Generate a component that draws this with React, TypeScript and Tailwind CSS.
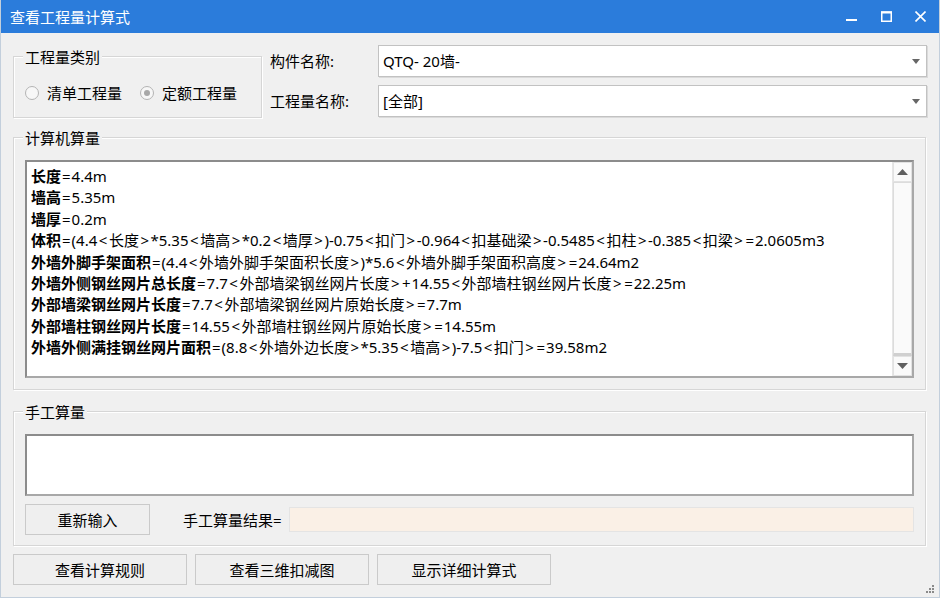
import type { ReactNode } from "react"

const font = "font-['Noto_Sans','Noto_Sans_CJK_SC',sans-serif]"

const lines: [string, string][] = [
  ["长度", "=4.4m"],
  ["墙高", "=5.35m"],
  ["墙厚", "=0.2m"],
  ["体积", "=(4.4<长度>*5.35<墙高>*0.2<墙厚>)-0.75<扣门>-0.964<扣基础梁>-0.5485<扣柱>-0.385<扣梁>=2.0605m3"],
  ["外墙外脚手架面积", "=(4.4<外墙外脚手架面积长度>)*5.6<外墙外脚手架面积高度>=24.64m2"],
  ["外墙外侧钢丝网片总长度", "=7.7<外部墙梁钢丝网片长度>+14.55<外部墙柱钢丝网片长度>=22.25m"],
  ["外部墙梁钢丝网片长度", "=7.7<外部墙梁钢丝网片原始长度>=7.7m"],
  ["外部墙柱钢丝网片长度", "=14.55<外部墙柱钢丝网片原始长度>=14.55m"],
  ["外墙外侧满挂钢丝网片面积", "=(8.8<外墙外边长度>*5.35<墙高>)-7.5<扣门>=39.58m2"],
]

// the < > = + signs are set a little wider in the original font
const Formula = ({ text }: { text: string }) => (
  <>
    {text.split(/([<>=+])/).map((part, i) =>
      /^[<>]$/.test(part) ? (
        <span key={i} className="px-[1.5px]">{part}</span>
      ) : /^[=+]$/.test(part) ? (
        <span key={i} className="px-[1px]">{part}</span>
      ) : (
        part
      )
    )}
  </>
)

const GroupBox = ({ title, className, children }: { title: string; className?: string; children: ReactNode }) => (
  <div className={`border border-[#d6d6d6] shadow-[inset_1px_1px_0_#fff,1px_1px_0_#fff] ${className ?? ""}`}>
    <div className="-mt-[10px] ml-[9px] w-fit bg-[#f0f0f0] px-[2px] text-[15px] leading-[20px]">{title}</div>
    {children}
  </div>
)

const Radio = ({ label, checked }: { label: string; checked?: boolean }) => (
  <div className="flex items-center gap-[8px]">
    <span className="flex h-[14px] w-[14px] items-center justify-center rounded-full border border-[#b4b4b4] bg-[#f7f7f7]">
      {checked && <span className="h-[6px] w-[6px] rounded-full bg-[#a8a8a8]" />}
    </span>
    <span className="text-[15px] leading-[20px]">{label}</span>
  </div>
)

const Combo = ({ value }: { value: string }) => (
  <div className="flex h-[32px] flex-1 items-center justify-between border border-[#c2c2c2] bg-white pl-[4px] pr-[6px] shadow-[1px_1px_0_#dadada]">
    <span className="text-[15px] leading-[20px]">{value}</span>
    <svg width="8" height="5" viewBox="0 0 8 5">
      <path d="M0 0h8L4 5z" fill="#666" />
    </svg>
  </div>
)

const Button = ({ label, className }: { label: string; className?: string }) => (
  <button className={`flex h-[31px] items-center justify-center border border-[#cacaca] bg-[#efefef] text-[15px] leading-[20px] ${className ?? ""}`}>
    {label}
  </button>
)

const ScrollBar = () => (
  <div className="flex w-[20px] flex-col border-l border-[#e6e6e6] bg-[#f4f4f4]">
    <div className="flex h-[20px] items-center justify-center border border-[#e2e2e2] bg-[#fafafa]">
      <svg width="11" height="6" viewBox="0 0 11 6">
        <path d="M0 6L5.5 0L11 6z" fill="#606060" />
      </svg>
    </div>
    <div className="flex-1 border border-[#dcdcdc] border-b-[3px] border-b-[#d0d0d0] bg-[#fafafa]" />
    <div className="flex h-[20px] items-center justify-center border border-[#e2e2e2] bg-[#fafafa]">
      <svg width="11" height="6" viewBox="0 0 11 6">
        <path d="M0 0L5.5 6L11 0z" fill="#606060" />
      </svg>
    </div>
  </div>
)

const App = () => {
  return (
    <div className={`flex h-[598px] w-[940px] flex-col overflow-hidden border-x border-b border-[#c3cfdc] bg-[#f0f0f0] text-black ${font}`}>
      <div className="flex h-[33px] shrink-0 items-center justify-between bg-[#2b7cdb] pl-[9px] text-white">
        <span className="text-[15px] leading-[20px]">查看工程量计算式</span>
        <div className="flex items-center">
          <div className="flex w-[35px] justify-center">
            <svg width="11" height="11" viewBox="0 0 11 11">
              <rect x="0" y="8" width="11" height="2" fill="#fff" />
            </svg>
          </div>
          <div className="flex w-[35px] justify-center">
            <svg width="11" height="11" viewBox="0 0 11 11">
              <rect x="0.75" y="1" width="9.5" height="9.25" fill="none" stroke="#fff" strokeWidth="1.5" />
              <rect x="0" y="0.5" width="11" height="2" fill="#fff" />
            </svg>
          </div>
          <div className="flex w-[35px] justify-center pr-[2px]">
            <svg width="11" height="11" viewBox="0 0 11 11">
              <path d="M0.5 0.5L10.5 10.5M10.5 0.5L0.5 10.5" stroke="#fff" strokeWidth="1.6" />
            </svg>
          </div>
        </div>
      </div>

      <div className="flex flex-1 flex-col pl-[12px] pr-[12px] pt-[12px]">
        <div className="flex items-start">
          <GroupBox title="工程量类别" className="mt-[11px] h-[62px] w-[249px]">
            <div className="mt-[16px] flex items-center gap-[18px] pl-[11px]">
              <Radio label="清单工程量" />
              <Radio label="定额工程量" checked />
            </div>
          </GroupBox>
          <div className="ml-[8px] flex flex-1 flex-col gap-[8px]">
            <div className="flex items-center">
              <span className="w-[108px] text-[15px] leading-[20px]">构件名称:</span>
              <Combo value="QTQ- 20墙-" />
            </div>
            <div className="flex items-center">
              <span className="w-[108px] text-[15px] leading-[20px]">工程量名称:</span>
              <Combo value="[全部]" />
            </div>
          </div>
        </div>

        <GroupBox title="计算机算量" className="mr-[1px] mt-[19px] pb-[11px]">
          <div className="mx-[11px] mt-[12px] flex h-[218px] border-2 border-[#a8a8a8] border-l-[#8c8c8c] border-t-[#8c8c8c] bg-white">
            <div className="flex-1 whitespace-nowrap pl-[4px] pt-[4px] text-[15px] leading-[21.4px]">
              {lines.map(([label, rest]) => (
                <div key={label}>
                  <span className="font-bold">{label}</span>
                  <Formula text={rest} />
                </div>
              ))}
            </div>
            <ScrollBar />
          </div>
        </GroupBox>

        <GroupBox title="手工算量" className="mr-[1px] mt-[21px] pb-[10px]">
          <div className="mx-[11px] mt-[12px] h-[62px] border-2 border-[#a8a8a8] border-l-[#8c8c8c] border-t-[#8c8c8c] bg-white" />
          <div className="mx-[11px] mt-[8px] flex items-center">
            <Button label="重新输入" className="w-[125px]" />
            <span className="ml-[33px] text-[15px] leading-[20px]">手工算量结果=</span>
            <div className="ml-[7px] h-[25px] flex-1 border border-[#e4e4e4] bg-[#faf0e6]" />
          </div>
        </GroupBox>

        <div className="mt-[8px] flex gap-[8px]">
          <Button label="查看计算规则" className="w-[174px]" />
          <Button label="查看三维扣减图" className="w-[174px]" />
          <Button label="显示详细计算式" className="w-[174px]" />
        </div>

        <div className="-mr-[8px] mt-auto flex justify-end pb-[3px]">
          <svg width="9" height="9" viewBox="0 0 9 9">
            <rect x="6" y="0" width="2" height="2" fill="#8a8a8a" />
            <rect x="3" y="3" width="2" height="2" fill="#8a8a8a" />
            <rect x="6" y="3" width="2" height="2" fill="#8a8a8a" />
            <rect x="0" y="6" width="2" height="2" fill="#8a8a8a" />
            <rect x="3" y="6" width="2" height="2" fill="#8a8a8a" />
            <rect x="6" y="6" width="2" height="2" fill="#8a8a8a" />
          </svg>
        </div>
      </div>
    </div>
  )
}

export default App
